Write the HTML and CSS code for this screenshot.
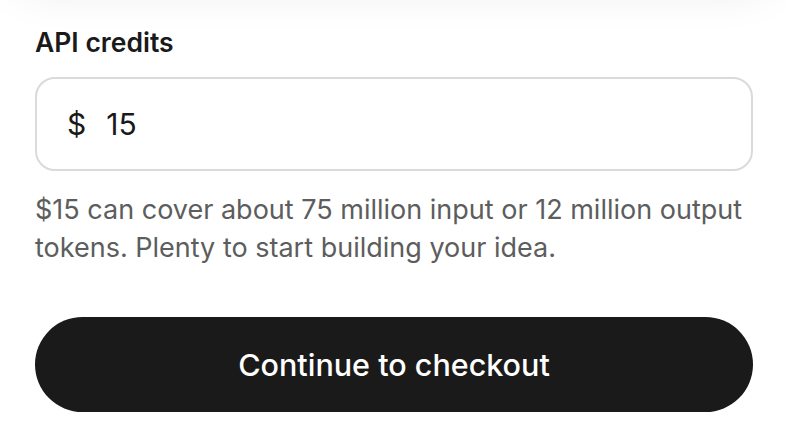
FILE: index.html
```html
<!DOCTYPE html>
<html lang="en">
<head>
  <meta charset="UTF-8">
  <meta name="viewport" content="width=device-width,initial-scale=1">
  <title>API credits</title>
  <link rel="stylesheet" href="styles.css">
</head>
<body>
  <!-- card above, only its shadow shows -->
  <div class="card-above"></div>

  <form class="credits">
    <label class="label" for="amount">API credits</label>

    <div class="amount-box">
      <span class="currency">$</span>
      <input id="amount" class="amount" type="text" value="15">
    </div>

    <p class="hint">$15 can cover about 75 million input or 12 million output tokens. Plenty to start building your idea.</p>

    <button type="button" class="checkout">Continue to checkout</button>
  </form>
</body>
</html>
```

FILE: styles.css
```css
body{
  margin:0; background:#fff; overflow:hidden; position:relative;
  font-family:Inter,"Noto Sans",sans-serif; color:#1a1a1a;
}
.card-above{
  position:absolute; left:15px; right:15px; top:-55px; height:40px;
  border-radius:40px; background:#fff; box-shadow:0 0 50px rgba(0,0,0,.11);
}
.credits{
  display:flex; flex-direction:column;
  padding:27px 33px 0 35px;
}
.label{
  font-size:26.5px; font-weight:600; line-height:30px;
}
.amount-box{
  display:flex; align-items:center; gap:20px;
  margin-top:20px; height:90px; padding:0 30px;
  border:2px solid #dadada; border-radius:20px;
}
.currency{font-size:30px;}
.amount{
  flex:1; border:none; outline:none; padding:0;
  font:inherit; font-size:30px; color:#1a1a1a; background:none;
}
.hint{
  margin:20px 0 0; font-size:27px; line-height:38px; color:#5d5d5d;
}
.checkout{
  margin-top:50px; height:95px; border:none; border-radius:48px;
  background:#1a1a1a; color:#fff; font:inherit; font-size:30.5px; font-weight:500;
  cursor:pointer;
}
```
